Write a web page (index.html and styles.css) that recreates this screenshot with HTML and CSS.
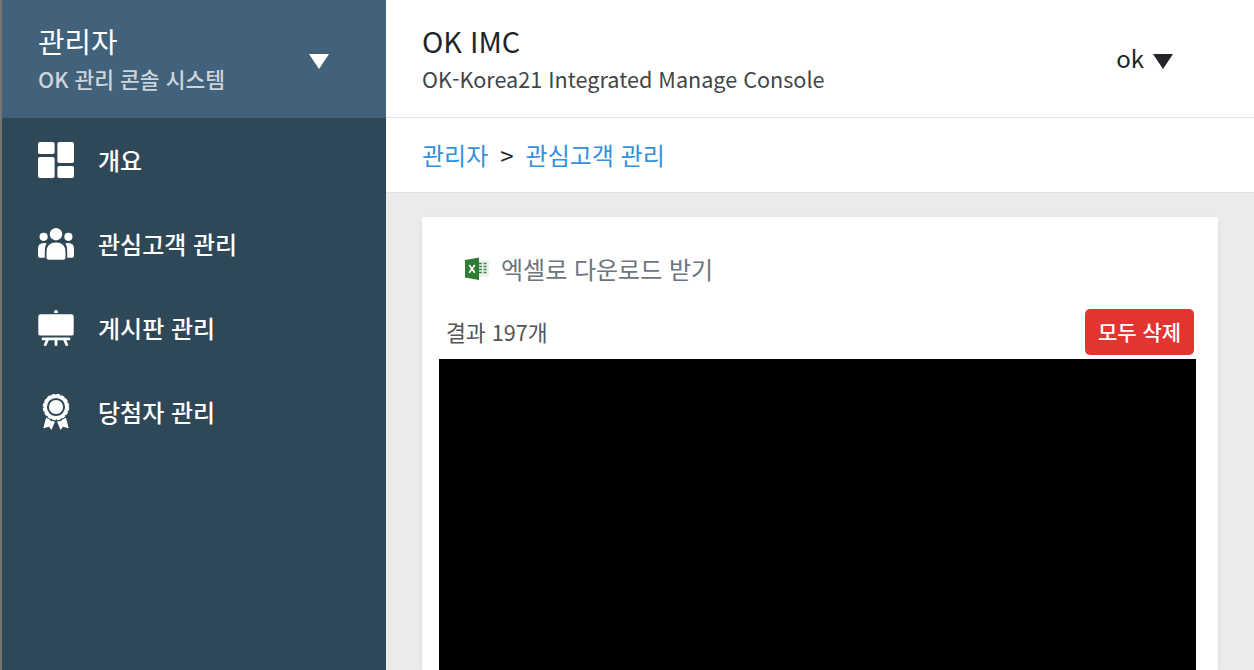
FILE: index.html
```html
<!DOCTYPE html>
<html lang="ko">
<head>
<meta charset="utf-8">
<title>OK IMC</title>
<link rel="stylesheet" href="styles.css">
</head>
<body>
<div class="app">
  <aside class="sidebar">
    <div class="profile">
      <div>
        <div class="title"><span>관리자</span></div>
        <div class="subtitle"><span>OK 관리 콘솔 시스템</span></div>
      </div>
      <svg class="caret" viewBox="0 0 20 15"><path d="M0 0H20L10 15Z"/></svg>
    </div>
    <nav class="menu">
      <a class="menu-item">
        <svg class="icon" viewBox="0 0 36 36"><rect width="16.6" height="12" rx="1.8"/><rect y="15" width="16.6" height="21" rx="1.8"/><rect x="19.4" width="16.6" height="21" rx="1.8"/><rect x="19.4" y="24" width="16.6" height="12" rx="1.8"/></svg>
        <span>개요</span>
      </a>
      <a class="menu-item">
        <svg class="icon" viewBox="0 0 36 36"><circle cx="18" cy="8.2" r="6.2"/><circle cx="5.6" cy="10.8" r="4.1"/><circle cx="30.4" cy="10.8" r="4.1"/><path d="M8.5 31.5V26Q8.5 16.5 18 16.5T27.5 26V31.5Q27.5 33.7 25.3 33.7H10.7Q8.5 33.7 8.5 31.5Z"/><path d="M8.5 17.3Q6.8 20.5 6.8 25V31.7H1.8Q0 31.7 0 29.9V23Q0 17 5.5 17Q7.2 17 8.5 17.3Z"/><path d="M27.5 17.3Q29.2 20.5 29.2 25V31.7H34.2Q36 31.7 36 29.9V23Q36 17 30.5 17Q28.8 17 27.5 17.3Z"/></svg>
        <span>관심고객 관리</span>
      </a>
      <a class="menu-item">
        <svg class="icon" viewBox="0 0 36 36"><path d="M16 3V2A2 2 0 0 1 20 2V3Z"/><rect x=".3" y="4.3" width="35.4" height="21.3" rx="2.2"/><rect x="3.6" y="27.6" width="28.8" height="2.7" rx="1.3"/><path class="legs" d="M9.5 29.5L7.3 34.7M18 29.5V34.7M26.5 29.5L28.7 34.7"/></svg>
        <span>게시판 관리</span>
      </a>
      <a class="menu-item">
        <svg class="icon" viewBox="0 0 36 36"><circle cx="18" cy="13" r="10.7" class="ring"/><circle cx="18" cy="13" r="12.2" class="scallop"/><circle cx="18" cy="13" r="7.1"/><path d="M8 23.8Q12 25 13 27L17 27.5L13.5 36L11 32.7L5.3 34.2Z"/><path d="M28 23.8Q24 25 23 27L19 27.5L22.5 36L25 32.7L30.7 34.2Z"/></svg>
        <span>당첨자 관리</span>
      </a>
    </nav>
  </aside>
  <main class="main">
    <header class="header">
      <div>
        <h1 class="title"><span>OK IMC</span></h1>
        <div class="subtitle"><span>OK-Korea21 Integrated Manage Console</span></div>
      </div>
      <div class="user"><span>ok</span><svg class="caret" viewBox="0 0 20 15"><path d="M0 0H20L10 15Z"/></svg></div>
    </header>
    <div class="breadcrumb"><a>관리자</a><span class="sep">&gt;</span><a>관심고객 관리</a></div>
    <div class="content">
      <section class="card">
        <div class="download">
          <svg class="excel" viewBox="0 0 24 24"><rect x="13" y="3.5" width="11" height="16.5" rx="1" fill="#eceff1"/><path d="M13 6.5H17M18.5 6.5H21.5M13 9.5H17M18.5 9.5H21.5M13 12.5H17M18.5 12.5H21.5M13 15.5H17M18.5 15.5H21.5" stroke="#388e3c" stroke-width="1.3"/><path d="M14 23L0 20.5V3L14 .5Z" fill="#2e7d32"/><path d="M4.2 8L9.8 15.8M9.8 8L4.2 15.8" stroke="#fff" stroke-width="1.7"/></svg>
          <span>엑셀로 다운로드 받기</span>
        </div>
        <div class="toolbar"><span class="count">결과 197개</span><button class="delete">모두 삭제</button></div>
        <div class="table"></div>
      </section>
    </div>
  </main>
</div>
</body>
</html>
```
FILE: styles.css
```css
* { box-sizing: border-box; }
body {
  margin: 0;
  font-family: "Noto Sans CJK KR", sans-serif;
  font-size: 24px;
  line-height: 36px;
  color: #212529;
}
.app { display: flex; height: 670px; overflow: hidden; }
svg { display: block; flex: none; fill: currentColor; }
.sidebar {
  flex: none;
  width: 386px;
  border-left: 2px solid #757575;
  background: #2f4858;
  color: #fff;
}
.profile {
  display: flex;
  justify-content: space-between;
  height: 118px;
  padding: 19px 57px 0 36px;
  background: #42617a;
}
.title { margin: 0; font-size: 28.8px; line-height: 43px; font-weight: 400; }
.subtitle { font-size: 21.6px; line-height: 33px; }
.sidebar .subtitle { color: #ccd5dc; font-weight: 500; font-size: 21.5px; }
.caret { width: 20px; height: 15px; }
.profile .caret { margin-top: 35px; }
.menu-item {
  display: flex;
  align-items: center;
  gap: 24px;
  height: 84px;
  padding-left: 36px;
  font-weight: 500;
}
.icon { width: 36px; height: 36px; }
.legs { stroke: currentColor; stroke-width: 2.8; stroke-linecap: round; }
.ring { fill: none; stroke: currentColor; stroke-width: 3.2; }
.scallop { fill: none; stroke: currentColor; stroke-width: 2; stroke-dasharray: 3.8 .99; }
.main { flex: 1; display: flex; flex-direction: column; background: #ebebeb; }
.header {
  display: flex;
  justify-content: space-between;
  height: 118px;
  padding: 19px 81px 0 36px;
  background: #fff;
  border-bottom: 1px solid #dee2e6;
}
.header .subtitle { color: #424548; }
.user { display: flex; gap: 9px; height: 36px; margin-top: 21px; }
.user .caret { margin-top: 14px; }
.breadcrumb {
  display: flex;
  gap: 12px;
  height: 75px;
  padding: 19px 36px;
  background: #fff;
  border-bottom: 1px solid #dee2e6;
}
.breadcrumb a { color: #3490dc; }
.content { flex: 1; padding: 24px 36px 0; }
.card {
  height: 100%;
  padding: 34px 22px 0 17px;
  background: #fff;
  box-shadow: 0 3px 6px rgba(0, 0, 0, .075);
  display: flex;
  flex-direction: column;
}
.download { display: flex; gap: 12px; height: 36px; padding-left: 26px; color: #6c757d; }
.excel { width: 24px; height: 24px; margin-top: 6px; }
.toolbar {
  display: flex;
  justify-content: space-between;
  align-items: center;
  height: 46px;
  margin: 22px 2px 4px 7px;
}
.count { font-size: 21.6px; color: #555; }
.delete {
  width: 109px;
  height: 46px;
  padding: 0 0 2px;
  border: 0;
  border-radius: 5px;
  background: #e3342f;
  color: #fff;
  font: 500 21px/44px "Noto Sans CJK KR", sans-serif;
  white-space: nowrap;
}
.table { flex: 1; background: #000; }
```
